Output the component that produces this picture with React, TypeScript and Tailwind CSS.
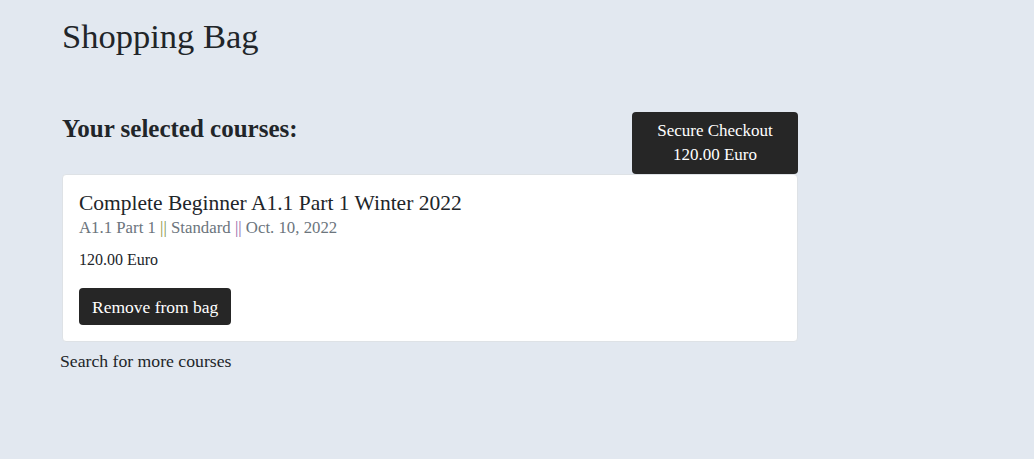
import React from "react";

export default function App() {
  return (
    <div
      className="min-h-[459px] w-full bg-[#e2e8f0] text-[#212529]"
      style={{ fontFamily: '"Liberation Serif", "DejaVu Serif", serif' }}
    >
      <div className="pl-[62px] pt-[14px]">
        <h1 className="text-[34.5px] leading-[44px] text-[#212529]">Shopping Bag</h1>
        <div className="mt-[54px] w-[736px]">
          <div className="flex items-end justify-between">
            <h2 className="mb-[30px] text-[25px] font-bold leading-[30px] text-[#212529]">
              Your selected courses:
            </h2>
            <button className="flex h-[62px] w-[166px] flex-col items-center justify-center rounded-[4px] bg-[#262626] text-[17px] leading-[24px] text-white">
              <span>Secure Checkout</span>
              <span>120.00 Euro</span>
            </button>
          </div>
          <div className="flex h-[168px] flex-col rounded-[4px] border border-[#dee2e6] bg-white px-[16px] pt-[14px]">
            <div className="text-[21.5px] leading-[28px] text-[#212529]">
              Complete Beginner A1.1 Part 1 Winter 2022
            </div>
            <div className="text-[16.8px] leading-[22px] text-[#6c757d]">
              A1.1 Part 1 <span className="text-[#7f9448]">||</span> Standard{" "}
              <span className="text-[#8f66a8]">||</span> Oct. 10, 2022
            </div>
            <div className="mt-[10px] text-[16px] leading-[22px] text-[#212529]">120.00 Euro</div>
            <div className="mt-[17px]">
              <button className="h-[37px] rounded-[4px] bg-[#262626] px-[13px] text-[17.5px] leading-[24px] text-white">
                Remove from bag
              </button>
            </div>
          </div>
        </div>
        <div className="-ml-[2px] mt-[7px] text-[17.7px] font-medium leading-[24px] text-[#212529]">
          Search for more courses
        </div>
      </div>
    </div>
  );
}
